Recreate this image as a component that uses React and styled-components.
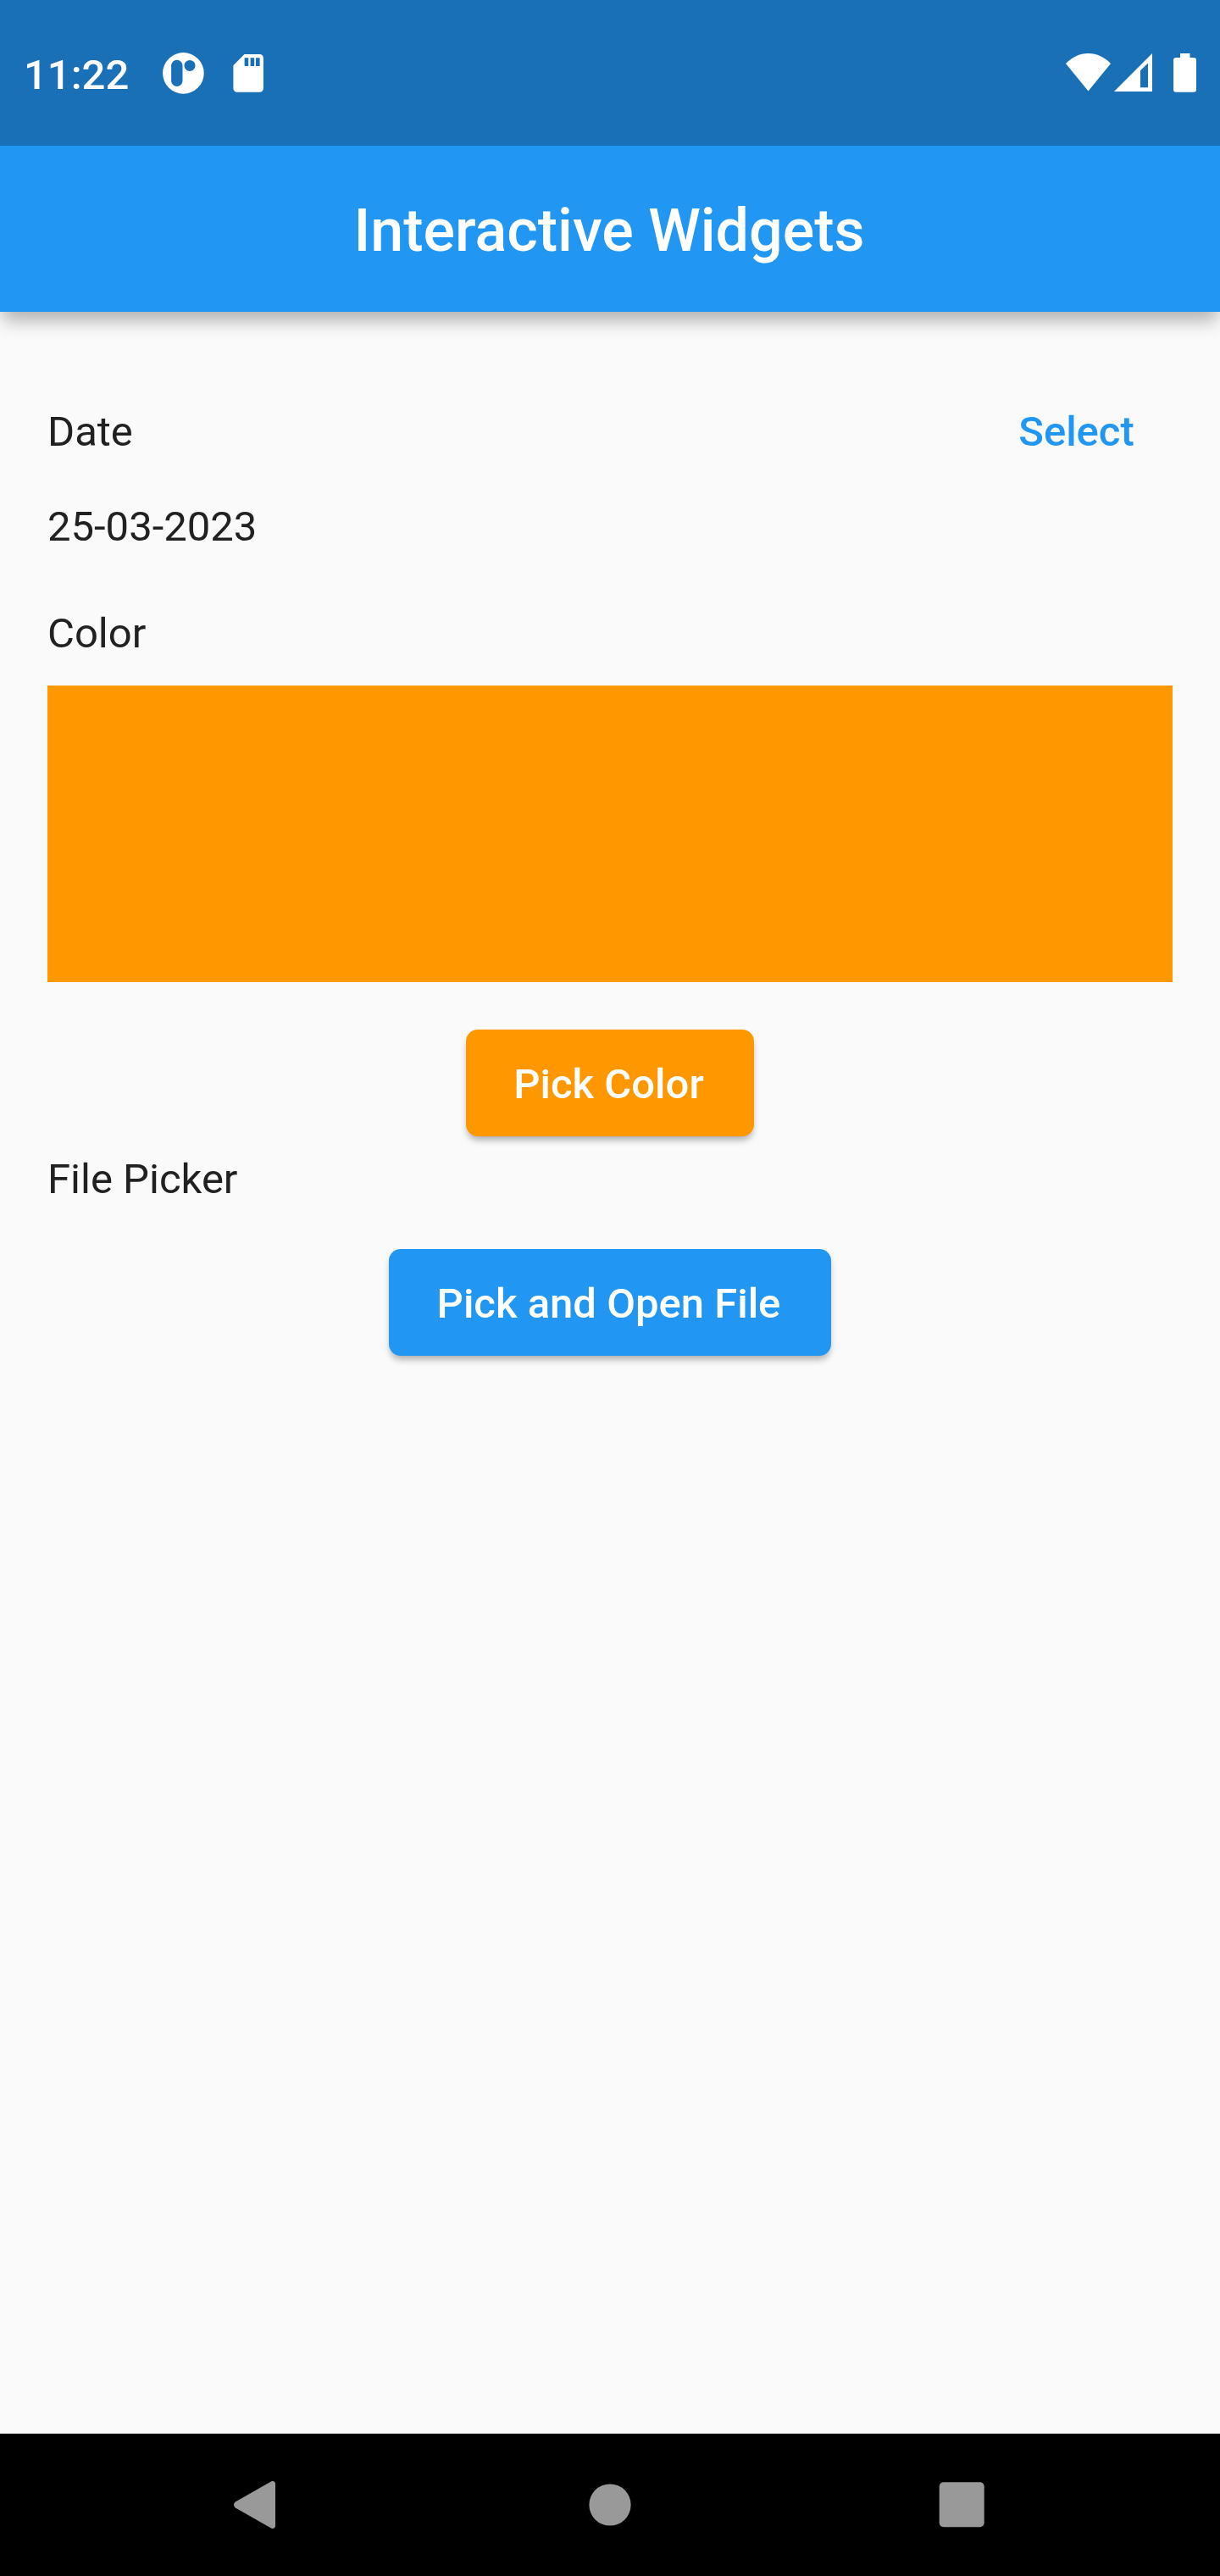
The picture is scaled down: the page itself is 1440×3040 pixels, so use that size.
import React from "react";
import styled, { createGlobalStyle } from "styled-components";

const GlobalStyle = createGlobalStyle`
  * { box-sizing: border-box; }
  body { margin: 0; background: #fafafa; }
`;

const Screen = styled.div`
  width: 1440px;
  height: 3040px;
  display: flex;
  flex-direction: column;
  background: #fafafa;
  color: #212121;
  font-family: Roboto, "Liberation Sans", sans-serif;
  font-size: 49px;
  line-height: 56px;
  overflow: hidden;
`;

const StatusBar = styled.div`
  height: 172px;
  flex: none;
  z-index: 1;
  display: flex;
  justify-content: space-between;
  align-items: flex-start;
  padding: 58px 28px 0;
  background: #1970b6;
  color: #fff;
`;

const StatusGroup = styled.div`
  display: flex;
  align-items: ${(p) => p.$align || "center"};
  height: 57px;
  padding-top: ${(p) => p.$top || 0}px;
`;

const Clock = styled.span`
  width: 164px;
  height: 57px;
  line-height: 61px;
  font-weight: 500;
`;

const Glyph = styled.svg`
  display: block;
  flex: none;
  width: ${(p) => p.$w}px;
  height: ${(p) => p.$h}px;
  margin-left: ${(p) => p.$gap || 0}px;
  fill: ${(p) => p.$fill || "#fff"};
`;

const AppBar = styled.header`
  height: 196px;
  flex: none;
  display: flex;
  align-items: center;
  justify-content: center;
  padding: 4px 2px 0 0;
  background: #2196f3;
  box-shadow: 0 13px 20px -3px rgba(0, 0, 0, 0.3);
`;

const Title = styled.h1`
  margin: 0;
  color: #fff;
  font-size: 70px;
  font-weight: 500;
  line-height: 82px;
`;

const Content = styled.main`
  flex: 1;
  display: flex;
  flex-direction: column;
  padding: 56px 56px 0;
`;

const DateRow = styled.div`
  height: 168px;
  display: flex;
  align-items: center;
  justify-content: space-between;
`;

const Label = styled.div`
  height: 56px;
  line-height: 59px;
  margin-top: ${(p) => p.$top || 0}px;
`;

const BaseButton = styled.button`
  border: 0;
  margin: 0;
  padding: 3px 3px 0 0;
  height: 126px;
  font: inherit;
  font-weight: 500;
  border-radius: 14px;
`;

const TextButton = styled(BaseButton)`
  width: 224px;
  background: transparent;
  color: #2196f3;
`;

const RaisedButton = styled(BaseButton)`
  width: ${(p) => p.$w}px;
  background: ${(p) => p.$color};
  color: #fff;
  box-shadow: 0 6px 9px -2px rgba(0, 0, 0, 0.33);
`;

const ButtonSlot = styled.div`
  height: 168px;
  margin-top: ${(p) => p.$top}px;
  display: flex;
  align-items: center;
  justify-content: center;
`;

const Swatch = styled.div`
  height: 350px;
  margin-top: 35px;
  background: #ff9800;
`;

const NavBar = styled.nav`
  height: 168px;
  flex: none;
  display: flex;
  align-items: center;
  justify-content: space-between;
  padding: 0 263px;
  background: #000;
`;

export default function App() {
  return (
    <Screen>
      <GlobalStyle />
      <StatusBar>
        <StatusGroup>
          <Clock>11:22</Clock>
          <Glyph $w={49} $h={49} viewBox="0 0 49 49">
            <path
              fillRule="evenodd"
              d="M24.4 0.1a24.3 24.3 0 1 0 0 48.6a24.3 24.3 0 1 0 0-48.6ZM16.8 8.8a6.7 6.7 0 0 1 6.7 6.7v17.8a6.7 6.7 0 0 1-13.4 0V15.5a6.7 6.7 0 0 1 6.7-6.7ZM32 8.9a6.5 6.5 0 1 1 0 13a6.5 6.5 0 1 1 0-13Z"
            />
          </Glyph>
          <Glyph $w={36} $h={45} $gap={34} viewBox="0 0 36 45">
            <path
              fillRule="evenodd"
              d="M13.4 0H31.5a4.4 4.4 0 0 1 4.4 4.4V40.3a4.4 4.4 0 0 1-4.4 4.4H4.8a4.4 4.4 0 0 1-4.4-4.4V13.2ZM13.6 4.2V14H18.2V4.2ZM20.6 4.2V14H25.2V4.2ZM27 4.2V14H31.6V4.2Z"
            />
          </Glyph>
        </StatusGroup>
        <StatusGroup $align="flex-start" $top={5}>
          <Glyph $w={53} $h={45} viewBox="0 0 53 45">
            <path d="M26.5 44.5L0 12C7 4.5 16.5 0 26.5 0S46 4.5 53 12Z" />
          </Glyph>
          <Glyph $w={45} $h={45} $gap={4} viewBox="0 0 45 45">
            <path fillRule="evenodd" d="M0 45H45V0ZM31 20.2L40 11.4V40.3H31Z" />
          </Glyph>
          <Glyph $w={27} $h={46} $gap={25} viewBox="0 0 27 46">
            <path d="M8 0H19.5V5H24a3 3 0 0 1 3 3V42.7a3 3 0 0 1-3 3H3a3 3 0 0 1-3-3V8a3 3 0 0 1 3-3H8Z" />
          </Glyph>
        </StatusGroup>
      </StatusBar>
      <AppBar>
        <Title>Interactive Widgets</Title>
      </AppBar>
      <Content>
        <DateRow>
          <Label>Date</Label>
          <TextButton>Select</TextButton>
        </DateRow>
        <Label>25-03-2023</Label>
        <Label $top={70}>Color</Label>
        <Swatch />
        <ButtonSlot $top={35}>
          <RaisedButton $w={340} $color="#ff9800">Pick Color</RaisedButton>
        </ButtonSlot>
        <Label>File Picker</Label>
        <ButtonSlot $top={35}>
          <RaisedButton $w={522} $color="#2196f3">Pick and Open File</RaisedButton>
        </ButtonSlot>
      </Content>
      <NavBar>
        <Glyph $w={84} $h={84} $fill="#999" viewBox="0 0 84 84">
          <path d="M14.8 38.6L57 14.6C59.5 13.3 62 14.6 62 17.5V66.5C62 69.4 59.5 70.7 57 69.4L14.8 45.4C12.4 43.8 12.4 40.2 14.8 38.6Z" />
        </Glyph>
        <Glyph $w={84} $h={84} $fill="#999" viewBox="0 0 84 84">
          <circle cx="42" cy="42" r="24.6" />
        </Glyph>
        <Glyph $w={84} $h={84} $fill="#999" viewBox="0 0 84 84">
          <rect x="15.7" y="15.3" width="53" height="53" rx="5" />
        </Glyph>
      </NavBar>
    </Screen>
  );
}
